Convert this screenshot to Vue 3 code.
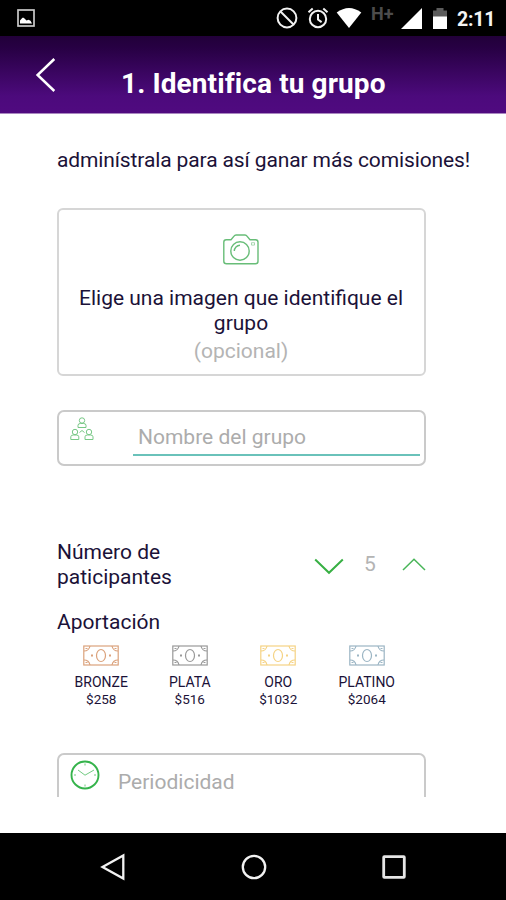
<script setup>
const tiers = [
  { name: 'BRONZE', price: '$258', tone: 'bronze' },
  { name: 'PLATA', price: '$516', tone: 'plata' },
  { name: 'ORO', price: '$1032', tone: 'oro' },
  { name: 'PLATINO', price: '$2064', tone: 'platino' },
]
</script>

<template>
  <div class="screen">
    <div class="status">
      <svg class="picture" width="18" height="18" viewBox="0 0 18 18">
        <rect x="1" y="1" width="16" height="16" fill="none" stroke="#c9c9c9" stroke-width="1.7" />
        <path d="M3 14.500v-3l2-2.300 1-.6 1.500.8 2 2.200 2-.8 2 1 1.500 2.700z" fill="#fff" />
      </svg>
      <svg class="none" width="22" height="22" viewBox="0 0 22 22" fill="none" stroke="#f2f2f2" stroke-width="2">
        <circle cx="11" cy="11" r="9.4" />
        <path d="M4.5 4.5l13 13" />
      </svg>
      <svg class="alarm" width="22" height="22" viewBox="0 0 22 22" fill="none" stroke="#f2f2f2" stroke-width="2">
        <circle cx="11" cy="12" r="8.2" />
        <path d="M1.5 5.2l4.2-3.6M20.5 5.2l-4.2-3.6M11 7v5.5l3.6 2.6" />
      </svg>
      <svg class="wifi" width="26" height="22" viewBox="0 0 26 22">
        <path d="M.7 5.5Q13-3.500 25.300 5.500L13 21z" fill="#fff" />
      </svg>
      <span class="network">H+</span>
      <svg class="signal" width="21" height="21" viewBox="0 0 21 21">
        <path d="M21 0v21H0z" fill="#fff" />
      </svg>
      <svg class="battery" width="14" height="21" viewBox="0 0 14 21">
        <path d="M0 9V2.500h3.500V0h7v2.500H14V9z" fill="#5c5c5c" />
        <path d="M0 8.500h14V21H0z" fill="#fff" />
      </svg>
      <span class="time">2:11</span>
    </div>

    <header class="header">
      <svg class="back" width="22" height="36" viewBox="0 0 22 36">
        <path d="M19.300 2L2.600 18l16.700 16" fill="none" stroke="#fff" stroke-width="2.500" />
      </svg>
      <h1>1. Identifica tu grupo</h1>
    </header>

    <main class="content">
      <p class="intro">adminístrala para así ganar más comisiones!</p>

      <section class="upload">
        <svg width="36" height="31" viewBox="0 0 36 31" fill="none" stroke="#68bd78" stroke-width="1.400">
          <path d="M3.200 5.800H8l3-3.600c.6-.9 1-1.200 2-1.200h9c1 0 1.500.3 2 1.200l3 3.600h5.500c1.500 0 2.500 1 2.500 2.500v19c0 1.500-1 2.500-2.500 2.500h-29C1.800 29.800.8 28.800.8 27.300V8.300c0-1.500 1-2.500 2.400-2.500z" />
          <circle cx="17" cy="17" r="9.200" />
          <path d="M11.300 17a5.800 5.800 0 0 1 5.700-5.800" />
          <path d="M28.500 8.700h3v2.400h-3z" stroke-width=".8" opacity=".7" />
        </svg>
        <p>Elige una imagen que identifique el grupo</p>
        <span>(opcional)</span>
      </section>

      <div class="field name-field">
        <svg class="people" width="24" height="24" viewBox="0 0 24 24" fill="none" stroke="#78c886" stroke-width="1">
          <circle cx="12" cy="3.500" r="2.700" />
          <path d="M8 10.500V8.300q0-1.800 2.500-1.800h3q2.500 0 2.500 1.800v2.200z" />
          <circle cx="5" cy="15" r="2.700" />
          <path d="M.8 22.500v-2.700q0-1.800 2.500-1.800h3q2.500 0 2.500 1.800v2.700z" />
          <circle cx="19" cy="15" r="2.700" />
          <path d="M15 22.500v-2.700q0-1.800 2.500-1.800h3q2.500 0 2.500 1.800v2.700zM9.500 15.500l2.500-2 2.500 2" />
        </svg>
        <div class="input">Nombre del grupo</div>
      </div>

      <div class="counter">
        <p>Número de paticipantes</p>
        <svg class="down" width="30" height="17" viewBox="0 0 30 17" fill="none" stroke="#38b044" stroke-width="2">
          <path d="M1.200 1.500L15 14.800 28.800 1.500" />
        </svg>
        <span>5</span>
        <svg class="up" width="24" height="13" viewBox="0 0 24 13" fill="none" stroke="#48b558" stroke-width="1.500">
          <path d="M1 12L12 1.200 23 12" />
        </svg>
      </div>

      <h2>Aportación</h2>
      <div class="tiers">
        <div v-for="tier in tiers" :key="tier.name" class="tier" :class="tier.tone">
          <svg width="36" height="21" viewBox="0 0 36 21" fill="none" stroke="currentColor" stroke-width="1.200">
            <rect x=".8" y="1" width="34.400" height="19" />
            <ellipse cx="18" cy="10.500" rx="4.500" ry="6" />
            <path d="M1 6Q6 6 7 1M35 6Q30 6 29 1M1 15q5 0 6 5M35 15q-5 0-6 5M2.500 3.500h2M31.500 3.500h2M2.500 17.500h2M31.500 17.500h2" />
            <path d="M8 10.500h2M26 10.500h2" stroke-width="1.800" />
          </svg>
          <strong>{{ tier.name }}</strong>
          <span>{{ tier.price }}</span>
        </div>
      </div>

      <div class="field period-field">
        <svg width="30" height="30" viewBox="0 0 30 30" fill="none" stroke="#35b34b">
          <circle cx="15" cy="15" r="13.500" stroke-width="1.900" />
          <path d="M8 10l7 5.200 9-5.200M15 3.500v2M15 24.500v2M4 15h2M24 15h2" stroke-width="1" opacity=".7" />
        </svg>
        <span>Periodicidad</span>
      </div>
    </main>

    <nav class="navbar">
      <svg width="26" height="28" viewBox="0 0 26 28" fill="none" stroke="#f2f2f2" stroke-width="2.300">
        <path d="M23.300 2.500v23L2.500 14z" />
      </svg>
      <svg width="26" height="26" viewBox="0 0 26 26" fill="none" stroke="#f2f2f2" stroke-width="2.300">
        <circle cx="13" cy="13" r="11.200" />
      </svg>
      <svg width="24" height="24" viewBox="0 0 24 24" fill="none" stroke="#e6e6e6" stroke-width="2.800">
        <rect x="1.700" y="1.700" width="20.600" height="20.600" rx=".6" />
      </svg>
    </nav>
  </div>
</template>

<style>
body {
  margin: 0;
}
</style>

<style scoped>
* {
  box-sizing: border-box;
}
p,
h1,
h2 {
  margin: 0;
  font-weight: 400;
}
svg {
  display: block;
  flex: none;
}
.screen {
  width: 506px;
  height: 900px;
  display: flex;
  flex-direction: column;
  overflow: hidden;
  background: #fff;
  color: #1b1238;
  font-family: Roboto, sans-serif;
}
.status {
  height: 36px;
  flex: none;
  display: flex;
  align-items: center;
  padding-left: 17px;
  background: #000;
}
.none {
  margin-left: 241px;
}
.alarm {
  margin-left: 9px;
}
.wifi {
  margin-left: 7px;
}
.network {
  width: 25px;
  margin: 0 5px 9px 9px;
  color: #4c4c4c;
  font-size: 18px;
  font-weight: 700;
  line-height: 20px;
}
.battery {
  margin-left: 11px;
}
.time {
  margin: 2px 0 0 10px;
  color: #f4f4f4;
  font-size: 19.500px;
  font-weight: 700;
  letter-spacing: -0.2px;
}
.header {
  height: 78px;
  flex: none;
  display: flex;
  align-items: center;
  padding-left: 35px;
  background: linear-gradient(#210039, #270043 15%, #4c0a7c 78%, #500a80);
  border-bottom: 1px solid #a987c0;
}
.back {
  margin-top: 1px;
}
h1 {
  margin: 19px 0 0 64px;
  color: #fff;
  font-size: 28px;
  font-weight: 700;
  line-height: 32px;
  letter-spacing: 0.100px;
  white-space: nowrap;
}
.content {
  height: 683px;
  flex: none;
  padding: 34px 80px 0 57px;
  overflow: hidden;
}
.intro {
  font-size: 21px;
  line-height: 25px;
  letter-spacing: -0.120px;
  white-space: nowrap;
}
.upload {
  height: 168px;
  margin-top: 35px;
  padding: 24px 1px 0 0;
  display: flex;
  flex-direction: column;
  align-items: center;
  border: 2px solid #d6d6d6;
  border-radius: 6px;
  font-size: 21px;
  line-height: 25px;
  text-align: center;
}
.upload p {
  width: 340px;
  margin-top: 21px;
}
.upload span {
  margin-top: 3px;
  color: #b4b4b4;
}
.field {
  display: flex;
  border: 2px solid #cacaca;
  border-radius: 7px;
}
.name-field {
  height: 56px;
  margin-top: 34px;
  padding: 5px 4px 0 11px;
}
.input {
  width: 288px;
  height: 39px;
  margin-left: 39px;
  padding: 8px 5px 0;
  border-bottom: 2px solid #6ac2ba;
  color: #acacac;
  font-size: 21px;
  line-height: 25px;
}
.counter {
  height: 50px;
  margin-top: 74px;
  display: flex;
  align-items: center;
  font-size: 21px;
  line-height: 25px;
}
.counter p {
  width: 130px;
  margin-right: 128px;
}
.counter span {
  width: 12px;
  margin: 0 26px 2px 20px;
  color: #b4b4b4;
}
.down {
  margin-top: 2px;
}
.up {
  margin-bottom: 1px;
}
h2 {
  margin-top: 20px;
  font-size: 21px;
  line-height: 25px;
}
.tiers {
  width: 354px;
  margin-top: 10px;
  display: grid;
  grid-template-columns: repeat(4, 1fr);
}
.tier {
  display: flex;
  flex-direction: column;
  align-items: center;
  font-size: 14px;
  line-height: 17px;
}
.tier strong,
.tier span {
  color: #1b1238;
  font-weight: 400;
}
.tier strong {
  margin-top: 8px;
}
.tier span {
  font-size: 13.500px;
}
.bronze {
  color: #dba27c;
}
.plata {
  color: #999;
}
.oro {
  color: #f5d384;
}
.platino {
  color: #9bb5c4;
}
.period-field {
  height: 60px;
  margin-top: 45px;
  padding: 5px 0 0 11px;
  color: #acacac;
  font-size: 21px;
  line-height: 25px;
}
.period-field span {
  margin: 10px 0 0 18px;
}
.navbar {
  flex: none;
  height: 67px;
  margin-top: 36px;
  padding: 0 100px;
  display: flex;
  align-items: center;
  justify-content: space-between;
  background: #000;
}
</style>
